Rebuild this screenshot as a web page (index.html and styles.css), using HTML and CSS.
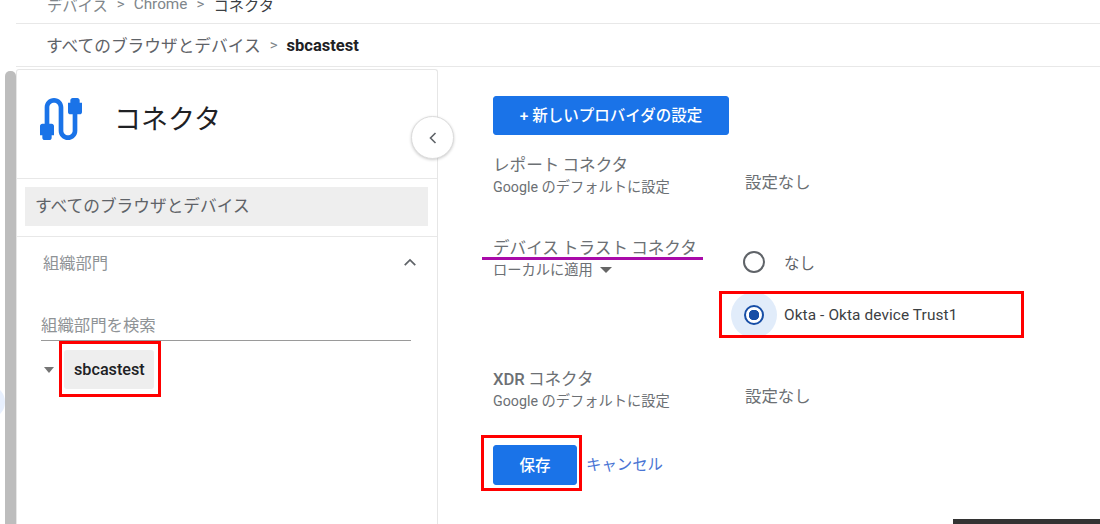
FILE: index.html
```html
<!DOCTYPE html>
<html lang="ja">
<head>
<meta charset="utf-8">
<title>コネクタ</title>
<link rel="stylesheet" href="styles.css">
</head>
<body>
<div class="page">
  <nav class="crumb-top">
    <span>デバイス</span><span class="sep">&gt;</span><span>Chrome</span><span class="sep">&gt;</span><span class="current">コネクタ</span>
  </nav>
  <nav class="crumb-org">
    <span>すべてのブラウザとデバイス</span><span class="sep">&gt;</span><strong>sbcastest</strong>
  </nav>
  <div class="main">
    <div class="scrollbar"></div>
    <aside class="card">
      <header class="card-head">
        <svg class="cable" viewBox="0 0 24 24" aria-hidden="true"><path d="M20 5V4c0-.55-.45-1-1-1h-2c-.55 0-1 .45-1 1v1h-1v4c0 .55.45 1 1 1h1v7c0 1.1-.9 2-2 2s-2-.9-2-2V7c0-2.21-1.79-4-4-4S5 4.79 5 7v7H4c-.55 0-1 .45-1 1v4h1v1c0 .55.45 1 1 1h2c.55 0 1-.45 1-1v-1h1v-4c0-.55-.45-1-1-1H7V7c0-1.1.9-2 2-2s2 .9 2 2v10c0 2.21 1.79 4 4 4s4-1.79 4-4v-7h1c.55 0 1-.45 1-1V5h-1z"/></svg>
        <h1>コネクタ</h1>
      </header>
      <div class="all-wrap"><div class="all-row">すべてのブラウザとデバイス</div></div>
      <section class="org">
        <div class="org-head">
          <span>組織部門</span>
          <svg class="chev-up" viewBox="0 0 16 10" aria-hidden="true"><path d="M2 8l6-6 6 6"/></svg>
        </div>
        <div class="search">組織部門を検索</div>
        <div class="tree">
          <span class="tree-arrow"></span>
          <div class="red-box tree-box"><div class="chip">sbcastest</div></div>
        </div>
      </section>
    </aside>
    <div class="content">
      <button class="btn btn-new">+ 新しいプロバイダの設定</button>
      <div class="row row-report">
        <div class="label"><div class="title">レポート コネクタ</div><div class="sub">Google のデフォルトに設定</div></div>
        <div class="value">設定なし</div>
      </div>
      <div class="row row-device">
        <div class="label"><div class="title">デバイス トラスト コネクタ</div><div class="sub">ローカルに適用<span class="sub-arrow"></span></div></div>
        <div class="options">
          <div class="option option-none"><span class="radio"></span><span>なし</span></div>
          <div class="red-box okta-box">
            <span class="halo"><span class="radio radio-on"></span></span><span class="okta-text">Okta - Okta device Trust1</span>
          </div>
        </div>
      </div>
      <div class="row row-xdr">
        <div class="label"><div class="title"><span class="xdr">XDR</span> コネクタ</div><div class="sub">Google のデフォルトに設定</div></div>
        <div class="value">設定なし</div>
      </div>
      <div class="actions">
        <div class="red-box save-box"><button class="btn btn-save">保存</button></div>
        <a class="cancel">キャンセル</a>
      </div>
    </div>
  </div>
  <div class="collapse">
    <svg viewBox="0 0 10 14" aria-hidden="true"><path d="M7.5 2L2.5 7l5 5"/></svg>
  </div>
  <div class="purple-line"></div>
  <div class="side-arc"></div>
  <div class="dark-bar"></div>
</div>
</body>
</html>
```
FILE: styles.css
```css
* { box-sizing: border-box; }
html, body { margin: 0; padding: 0; background: #fff; }
body { width: 1100px; height: 524px; overflow: hidden; font-family: Roboto, "Noto Sans CJK JP", sans-serif; color: #5f6368; }
.page { position: relative; width: 1100px; height: 524px; overflow: hidden; }

.crumb-top { height: 24px; margin-left: 16px; padding-left: 31px; border-bottom: 1px solid #e8e8e8; display: flex; align-items: center; font-size: 15.3px; color: #80868b; overflow: hidden; }
.crumb-top span { position: relative; top: -8px; }
.crumb-top .sep { width: 26px; text-align: center; font-size: 15px; }
.crumb-top .current { color: #3c4043; }

.crumb-org { height: 43px; margin-left: 16px; padding-left: 30px; border-bottom: 1px solid #e8e8e8; display: flex; align-items: center; font-size: 16.7px; color: #5f6368; }
.crumb-org .sep { width: 26px; text-align: center; font-size: 15px; color: #80868b; }
.crumb-org strong { font-size: 16.5px; font-weight: 700; color: #202124; }

.main { display: flex; height: 457px; padding-top: 2px; }
.scrollbar { width: 11px; margin-left: 5px; margin-top: 2px; background: #bdbdbd; border-radius: 5px 5px 0 0; }
.card { width: 422px; border: 1px solid #e6e6e6; border-bottom: 0; border-radius: 3px 3px 0 0; }
.card-head { height: 109px; padding: 21px 0 0 16px; display: flex; align-items: flex-start; border-bottom: 1px solid #e8e8e8; }
.cable { width: 56px; height: 56px; fill: #1a73e8; flex: none; }
.card-head h1 { margin: 9px 0 0 25px; font-size: 27px; line-height: 40px; font-weight: 400; color: #202124; }
.all-wrap { padding: 8px 9px 10px 8px; height: 58px; border-bottom: 1px solid #e8e8e8; }
.all-row { height: 39px; background: #eeeeee; padding-left: 10px; line-height: 39px; font-size: 16.7px; color: #5f6368; }

.org { padding: 0 26px 0 24px; }
.org-head { height: 53px; padding: 0 0 4px 2px; display: flex; align-items: center; justify-content: space-between; font-size: 16.3px; color: #8f9396; }
.chev-up { width: 14px; height: 9px; fill: none; stroke: #5f6368; stroke-width: 2; margin-right: -6px; margin-top: 1px; }
.search { margin-top: 23px; height: 28px; border-bottom: 1px solid #9a9a9a; font-size: 16.4px; line-height: 26px; color: #8f9396; width: 370px; }
.tree { display: flex; align-items: flex-start; padding: 0 0 0 3px; }
.tree-arrow { width: 0; height: 0; flex: none; margin-top: 26px; border-left: 5.5px solid transparent; border-right: 5.5px solid transparent; border-top: 6px solid #757575; }
.red-box { border: 3px solid #ff0000; }
.tree-box { width: 102px; height: 56px; flex: none; margin-left: 5px; padding: 6px 4px 0 2px; }
.chip { height: 39px; background: #eeeeee; border-radius: 3px; padding-left: 10px; line-height: 39px; font-size: 16.2px; font-weight: 500; color: #202124; }

.content { padding: 27px 0 0 55px; flex: 1; min-width: 0; }
.btn { border: 1px solid #1a73e8; border-radius: 3px; background: #1a73e8; color: #fff; font: 500 15.5px Roboto, "Noto Sans CJK JP", sans-serif; padding: 0 0 2px; display: block; }
.btn-new { width: 236px; height: 39px; padding-bottom: 4px; }
.row { display: flex; }
.label { width: 252px; flex: none; }
.title { font-size: 16.6px; line-height: 20px; color: #6c7074; word-spacing: -1px; }
.sub { font-size: 14.25px; line-height: 20px; margin-top: 1px; color: #6c7074; display: flex; align-items: center; }
.value { font-size: 16.4px; color: #6c7074; margin-top: 15px; line-height: 24px; }
.row-report { margin-top: 21px; height: 63px; }
.row-device { margin-top: 20px; }
.row-device .title { white-space: nowrap; }
.sub-arrow { width: 0; height: 0; margin-left: 7px; border-left: 6.5px solid transparent; border-right: 6.5px solid transparent; border-top: 6.5px solid #666; }
.options { margin-left: -26px; }
.option-none { display: flex; align-items: center; height: 24px; margin-top: 11px; font-size: 15.5px; color: #5f6368; padding-left: 24px; }
.option-none span:last-child { margin-left: 19px; }
.radio { display: block; width: 22px; height: 22px; border: 2px solid #5f6368; border-radius: 50%; flex: none; }
.okta-box { width: 305px; height: 47px; margin-top: 17px; display: flex; align-items: center; padding-left: 9px; overflow: hidden; }
.halo { width: 46px; height: 46px; border-radius: 50%; background: #e1ecfa; display: flex; align-items: center; justify-content: center; flex: none; }
.radio-on { width: 20px; height: 20px; border: 2px solid #174ea6; position: relative; background: radial-gradient(circle, #174ea6 0 5px, #fff 5.5px); }
.okta-text { margin-left: 7px; font-size: 15.4px; color: #3c4043; white-space: nowrap; letter-spacing: .1px; }
.row-xdr { margin-top: 32px; }
.xdr { font-weight: 500; }
.actions { display: flex; align-items: flex-start; margin-left: -12px; margin-top: 24px; }
.save-box { width: 101px; height: 56px; padding: 7px 0 0 9px; }
.btn-save { width: 84px; height: 40px; }
.cancel { margin: 18px 0 0 4px; font-size: 15.4px; line-height: 24px; color: #4a74d4; }

.collapse { position: absolute; left: 411px; top: 116px; width: 43px; height: 43px; border-radius: 50%; background: #fff; border: 1px solid #dcdcdc; box-shadow: 0 1px 3px rgba(0,0,0,.2); display: flex; align-items: center; justify-content: center; }
.collapse svg { width: 10px; height: 14px; fill: none; stroke: #5f6368; stroke-width: 1.6; }
.purple-line { position: absolute; left: 482px; top: 257px; width: 221px; height: 3px; background: #a90aa9; }
.side-arc { position: absolute; left: -20px; top: 387px; width: 25px; height: 30px; border-radius: 50%; background: #e8f0fe; }
.dark-bar { position: absolute; left: 953px; top: 519px; width: 147px; height: 5px; background: #333; }
```
